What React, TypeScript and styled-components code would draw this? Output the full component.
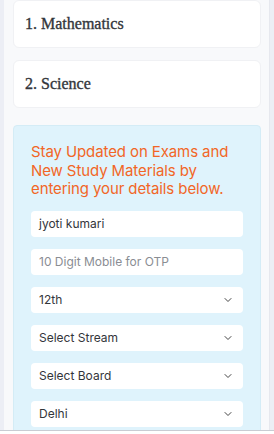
import * as React from 'react';
import styled, { createGlobalStyle } from 'styled-components';
import { ChevronDown } from 'lucide-react';

const GlobalStyle = createGlobalStyle`
  html, body {
    margin: 0;
    padding: 0;
    background: #eceef5;
  }
  * {
    box-sizing: border-box;
  }
`;

const subjects = ['1. Mathematics', '2. Science'];

type Field =
  | { kind: 'input'; value?: string; placeholder?: string }
  | { kind: 'select'; value: string };

const fields: Field[] = [
  { kind: 'input', value: 'jyoti kumari' },
  { kind: 'input', placeholder: '10 Digit Mobile for OTP' },
  { kind: 'select', value: '12th' },
  { kind: 'select', value: 'Select Stream' },
  { kind: 'select', value: 'Select Board' },
  { kind: 'select', value: 'Delhi' },
];

function App() {
  return (
    <>
      <GlobalStyle />
      <Page>
        <Panel>
          {subjects.map((s) => (
            <SubjectCard key={s}>
              <SubjectTitle>{s}</SubjectTitle>
            </SubjectCard>
          ))}
          <LeadBox>
            <Heading>
              Stay Updated on Exams and New Study Materials by entering your
              details below.
            </Heading>
            <Form>
              {fields.map((f, i) =>
                f.kind === 'input' ? (
                  <FieldBox key={i}>
                    <FieldText $muted={!f.value}>
                      {f.value ?? f.placeholder}
                    </FieldText>
                  </FieldBox>
                ) : (
                  <FieldBox key={i}>
                    <FieldText>{f.value}</FieldText>
                    <ChevronDown size={12} strokeWidth={2} color="#444" />
                  </FieldBox>
                )
              )}
            </Form>
          </LeadBox>
        </Panel>
        <Footer />
      </Page>
    </>
  );
}

const Page = styled.div`
  width: 274px;
  height: 434px;
  overflow: hidden;
  display: flex;
  flex-direction: column;
`;

const Panel = styled.div`
  height: 430px;
  margin: 0 4px 0 4px;
  padding: 0 8px 0 9px;
  background: #f8f9fb;
  border-right: 1px solid #e6e8ee;
  display: flex;
  flex-direction: column;
  gap: 12px;
  overflow: hidden;
`;

const SubjectCard = styled.div`
  height: 48px;
  flex-shrink: 0;
  background: #ffffff;
  border: 1px solid #f0f1f4;
  border-radius: 6px;
  display: flex;
  align-items: center;
  padding: 0 11px;
`;

const SubjectTitle = styled.h3`
  margin: 0;
  font-family: 'Liberation Serif', serif;
  font-weight: 400;
  font-size: 16px;
  color: #33363b;
  -webkit-text-stroke: 0.35px #33363b;
`;

const LeadBox = styled.div`
  margin-top: 5px;
  flex-shrink: 0;
  background: #dff3fc;
  border: 1px solid #d4ecf6;
  border-radius: 4px;
  padding: 17px 17px 12px;
`;

const Heading = styled.p`
  margin: 0 0 12px;
  font-family: Inter, 'Open Sans', sans-serif;
  font-size: 15px;
  line-height: 18.5px;
  color: #f26626;
  letter-spacing: -0.1px;
`;

const Form = styled.div`
  display: flex;
  flex-direction: column;
  gap: 12px;
`;

const FieldBox = styled.div`
  height: 26px;
  background: #ffffff;
  border-radius: 4px;
  display: flex;
  align-items: center;
  justify-content: space-between;
  padding: 0 9px 0 8px;
`;

const FieldText = styled.span<{ $muted?: boolean }>`
  font-family: Inter, 'Open Sans', sans-serif;
  font-size: 12px;
  color: ${(p) => (p.$muted ? '#8a8d93' : '#33363b')};
`;

const Footer = styled.div`
  flex: 1;
  background: #ffffff;
  border-top: 1px solid #c9ccd3;
`;

export default App;
